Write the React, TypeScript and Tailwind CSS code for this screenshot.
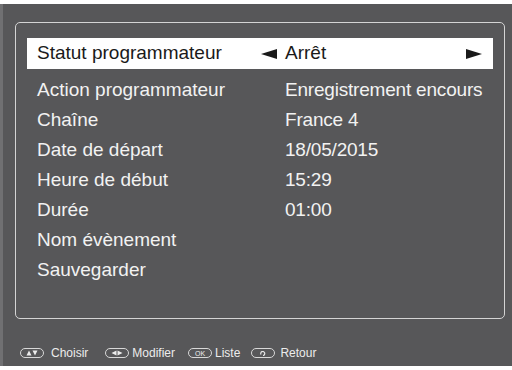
import React from 'react';

const rows: [string, string][] = [
  ['Action programmateur', 'Enregistrement encours'],
  ['Chaîne', 'France 4'],
  ['Date de départ', '18/05/2015'],
  ['Heure de début', '15:29'],
  ['Durée', '01:00'],
  ['Nom évènement', ''],
  ['Sauvegarder', ''],
];

function Pill({ children }: { children: React.ReactNode }) {
  return (
    <span className="flex h-[10px] w-[24px] items-center justify-center rounded-full border border-[#d8d8d8] text-[7px] leading-none text-[#ececec]">
      {children}
    </span>
  );
}

function Tri({ dir }: { dir: 'left' | 'right' }) {
  return (
    <svg width="16" height="10" viewBox="0 0 16 10">
      <path d={dir === 'left' ? 'M0 5 L16 0 L16 10 Z' : 'M16 5 L0 0 L0 10 Z'} fill="#1a1a1a" />
    </svg>
  );
}

export default function App() {
  return (
    <div className="h-[370px] w-[512px] bg-white pt-[4px] pb-[4px] font-['Liberation_Sans',Arial,sans-serif]">
      <div className="flex h-[362px] flex-col border-l-[3px] border-[#707072] bg-[#575759]">
        <div className="ml-[12px] mt-[18px] h-[297px] w-[490px] rounded-[5px] border border-[#d4d4d4] px-[11px] pt-[15px]">
          <div className="flex h-[31px] items-center bg-white text-[19px] text-[#1a1a1a]">
            <span className="w-[234px] pl-[10px]">Statut programmateur</span>
            <span className="mr-[8px] flex items-center">
              <Tri dir="left" />
            </span>
            <span className="flex-1">Arrêt</span>
            <span className="mr-[11px] flex items-center">
              <Tri dir="right" />
            </span>
          </div>
          <div className="mt-[6px] flex flex-col">
            {rows.map(([label, value]) => (
              <div key={label} className="flex h-[30px] items-center text-[19px] text-[#f2f2f2]">
                <span className="w-[258px] pl-[10px]">{label}</span>
                <span className="tracking-[-0.2px]">{value}</span>
              </div>
            ))}
          </div>
        </div>
        <div className="ml-[17px] mt-[25px] flex items-center text-[12px] text-[#ececec]">
          <Pill>
            <svg width="12" height="6" viewBox="0 0 12 6">
              <path d="M0.5 5.5 L3 0.5 L5.5 5.5 Z M6.5 0.5 L11.5 0.5 L9 5.5 Z" fill="#ececec" />
            </svg>
          </Pill>
          <span className="ml-[7px] mr-[17px]">Choisir</span>
          <Pill>
            <svg width="12" height="6" viewBox="0 0 12 6">
              <path d="M0.5 3 L5.5 0.5 L5.5 5.5 Z M6.5 0.5 L11.5 3 L6.5 5.5 Z" fill="#ececec" />
            </svg>
          </Pill>
          <span className="ml-[3px] mr-[13px]">Modifier</span>
          <Pill>OK</Pill>
          <span className="ml-[3px] mr-[11px]">Liste</span>
          <Pill>
            <svg width="6" height="5" viewBox="0 0 6 5">
              <path d="M1 3.5 A2 2 0 1 1 3 4.5" fill="none" stroke="#e8e8e8" strokeWidth="1.2" />
            </svg>
          </Pill>
          <span className="ml-[5px]">Retour</span>
        </div>
      </div>
    </div>
  );
}
